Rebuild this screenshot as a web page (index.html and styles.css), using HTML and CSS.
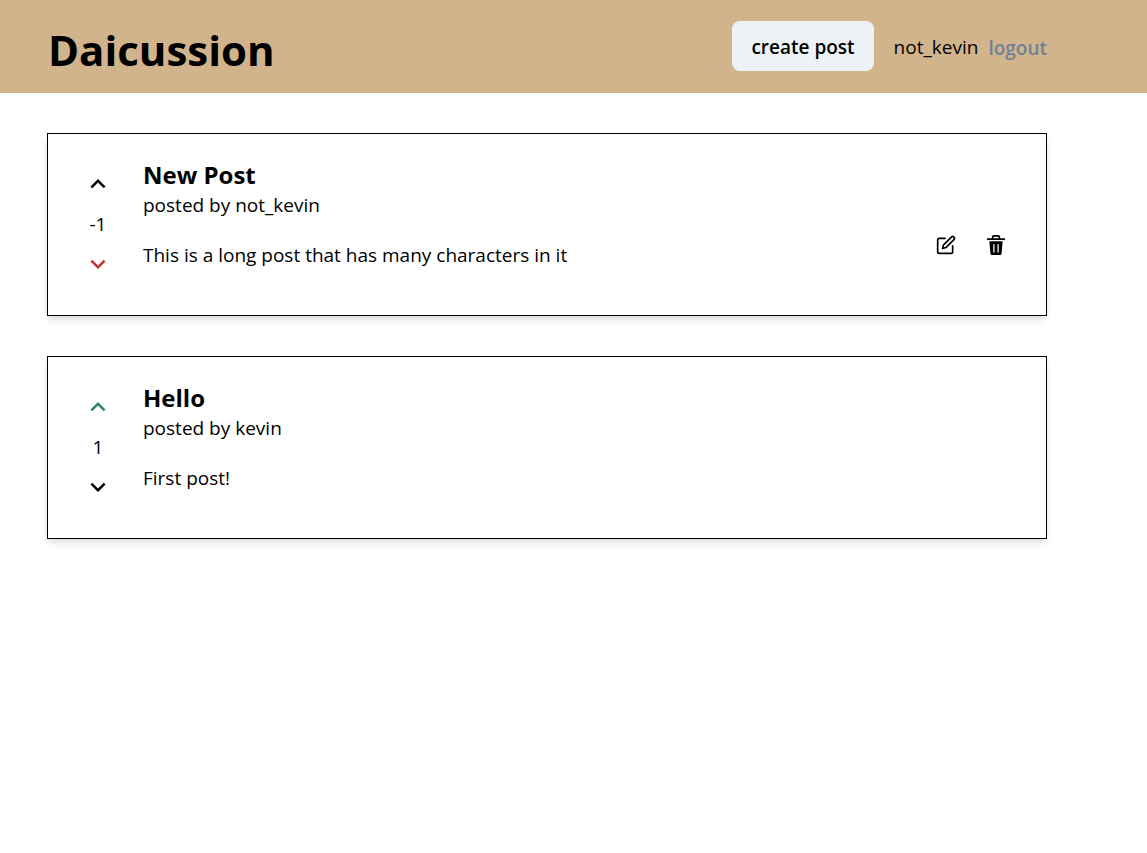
FILE: index.html
```html
<!DOCTYPE html>
<html lang="en">
<head>
  <meta charset="utf-8">
  <meta name="viewport" content="width=device-width, initial-scale=1">
  <title>Daicussion</title>
  <link rel="stylesheet" href="styles.css">
</head>
<body>
  <header class="navbar">
    <h1 class="brand">Daicussion</h1>
    <nav class="nav-actions">
      <button class="create-button" type="button">create post</button>
      <span class="username">not_kevin</span>
      <button class="logout-button" type="button">logout</button>
    </nav>
  </header>
  <main class="feed">
    <article class="post">
      <div class="votes">
        <button class="icon-button" type="button" aria-label="upvote post">
          <svg class="chevron" viewBox="0 0 24 24" aria-hidden="true"><path d="M12 8l-6 6 1.41 1.41L12 10.83l4.59 4.58L18 14z"/></svg>
        </button>
        <span class="score">-1</span>
        <button class="icon-button downvoted" type="button" aria-label="downvote post">
          <svg class="chevron" viewBox="0 0 24 24" aria-hidden="true"><path d="M16.59 8.59L12 13.17 7.41 8.59 6 10l6 6 6-6z"/></svg>
        </button>
      </div>
      <div class="post-content">
        <h2 class="post-title">New Post</h2>
        <p class="author">posted by not_kevin</p>
        <div class="post-row">
          <p class="post-text">This is a long post that has many characters in it</p>
          <div class="post-actions">
            <button class="icon-button" type="button" aria-label="edit post">
              <svg class="icon" viewBox="0 0 24 24" aria-hidden="true"><g fill="none" stroke="currentColor" stroke-linecap="round" stroke-width="2"><path d="M11 4H4a2 2 0 0 0-2 2v14a2 2 0 0 0 2 2h14a2 2 0 0 0 2-2v-7"/><path d="M18.5 2.5a2.121 2.121 0 0 1 3 3L12 15l-4 1 1-4 9.5-9.5z"/></g></svg>
            </button>
            <button class="icon-button" type="button" aria-label="delete post">
              <svg class="icon" viewBox="0 0 24 24" aria-hidden="true"><path d="M19.452 7.5H4.547a.5.5 0 0 0-.5.545l1.287 14.136A2 2 0 0 0 7.326 24h9.347a2 2 0 0 0 1.992-1.819L19.95 8.045a.5.5 0 0 0-.129-.382.5.5 0 0 0-.369-.163zm-9.2 13a.75.75 0 0 1-1.5 0v-9a.75.75 0 0 1 1.5 0zm5 0a.75.75 0 0 1-1.5 0v-9a.75.75 0 0 1 1.5 0zM22 4h-4.75a.25.25 0 0 1-.25-.25V2.5A2.5 2.5 0 0 0 14.5 0h-5A2.5 2.5 0 0 0 7 2.5v1.25a.25.25 0 0 1-.25.25H2a1 1 0 0 0 0 2h20a1 1 0 0 0 0-2zM9 3.75V2.5a.5.5 0 0 1 .5-.5h5a.5.5 0 0 1 .5.5v1.25a.25.25 0 0 1-.25.25h-5.5A.25.25 0 0 1 9 3.75z"/></svg>
            </button>
          </div>
        </div>
      </div>
    </article>
    <article class="post">
      <div class="votes">
        <button class="icon-button upvoted" type="button" aria-label="upvote post">
          <svg class="chevron" viewBox="0 0 24 24" aria-hidden="true"><path d="M12 8l-6 6 1.41 1.41L12 10.83l4.59 4.58L18 14z"/></svg>
        </button>
        <span class="score">1</span>
        <button class="icon-button" type="button" aria-label="downvote post">
          <svg class="chevron" viewBox="0 0 24 24" aria-hidden="true"><path d="M16.59 8.59L12 13.17 7.41 8.59 6 10l6 6 6-6z"/></svg>
        </button>
      </div>
      <div class="post-content">
        <h2 class="post-title">Hello</h2>
        <p class="author">posted by kevin</p>
        <div class="post-row">
          <p class="post-text">First post!</p>
        </div>
      </div>
    </article>
  </main>
</body>
</html>
```

FILE: styles.css
```css
* {
  box-sizing: border-box;
}

body {
  margin: 0;
  background: #fff;
  color: #000;
  font: 400 19px/30px "Segoe UI", "Open Sans", "Noto Sans", sans-serif;
}

h1,
h2,
p {
  margin: 0;
}

button {
  border: 0;
  padding: 0;
  background: none;
  color: inherit;
  font: inherit;
  font-weight: 600;
  cursor: pointer;
}

.navbar {
  display: flex;
  align-items: flex-start;
  justify-content: space-between;
  padding: 21px 100px 16px 48px;
  background: #d2b48c;
}

.brand {
  padding-top: 2px;
  font-size: 42px;
  font-weight: 700;
  line-height: 54px;
}

.nav-actions {
  display: flex;
  align-items: center;
}

.create-button {
  height: 50px;
  margin-right: 20px;
  padding: 2px 19px 0;
  border-radius: 8px;
  background: #edf2f7;
}

.username {
  margin-right: 10px;
  padding-top: 2px;
}

.logout-button {
  padding-top: 4px;
  color: #718096;
}

.feed {
  display: flex;
  flex-direction: column;
  gap: 40px;
  padding: 40px 100px 40px 47px;
}

.post {
  display: flex;
  gap: 20px;
  padding: 25px 25px 26px;
  border: 1px solid #000;
  box-shadow: 0 5px 8px -1px rgba(0, 0, 0, 0.1), 0 3px 5px -1px rgba(0, 0, 0, 0.06);
}

.votes {
  display: flex;
  flex-direction: column;
  align-items: center;
}

.icon-button {
  display: flex;
  align-items: center;
  justify-content: center;
  width: 50px;
  height: 50px;
}

.upvoted {
  color: #2f855a;
}

.downvoted {
  color: #c53030;
}

.chevron,
.icon {
  width: 30px;
  height: 30px;
  fill: currentColor;
}

.icon {
  width: 20px;
  height: 20px;
}

.post-content {
  flex: 1;
  padding-top: 1px;
}

.post-title {
  font-size: 24px;
  font-weight: 700;
  line-height: 30px;
}

.post-row {
  display: flex;
}

.post-text {
  flex: 1;
  margin-top: 20px;
}

.post-actions {
  display: flex;
}
```
